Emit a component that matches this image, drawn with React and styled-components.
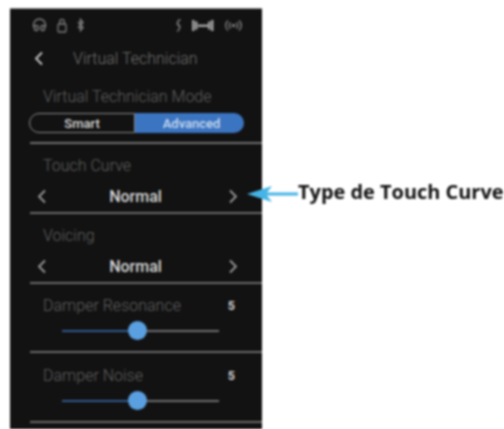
import React from 'react';
import styled, { createGlobalStyle } from 'styled-components';

const GlobalStyle = createGlobalStyle`
  html, body {
    margin: 0;
    padding: 0;
    background: #ffffff;
    overflow: hidden;
  }
`;

const Page = styled.div`
  position: relative;
  width: 504px;
  height: 429px;
  padding: 8px 0 0 10px;
  box-sizing: border-box;
  filter: blur(0.85px);
  font-family: Roboto, "Liberation Sans", sans-serif;
`;

const Panel = styled.div`
  width: 252px;
  height: 421px;
  box-sizing: border-box;
  background: #121212;
  border-top: 1px solid #8a8a8a;
  padding-left: 20px;
  display: flex;
  flex-direction: column;
`;

const StatusBar = styled.div`
  height: 32px;
  padding: 0 19px 0 2px;
  display: flex;
  align-items: center;
  gap: 10px;
  color: #7c7c7c;
`;

const StatusGap = styled.div`
  flex: 1;
`;

const TitleBar = styled.div`
  height: 34px;
  display: flex;
  align-items: center;
  gap: 29px;
  padding-left: 4px;
`;

const Title = styled.div`
  font-size: 16px;
  font-weight: 300;
  color: #707070;
`;

const ModeSection = styled.div`
  height: 69px;
  box-sizing: border-box;
  border-bottom: 2px solid #6e6e6e;
  display: flex;
  flex-direction: column;
`;

const Label = styled.div`
  font-size: 16px;
  font-weight: 300;
  color: ${(p) => p.$color || '#606060'};
  line-height: 20px;
`;

const ModeLabel = styled(Label)`
  margin: 12px 0 0 13px;
`;

const Toggle = styled.div`
  display: flex;
  width: 215px;
  height: 20px;
  margin-top: 6px;
  margin-left: -1px;
`;

const ToggleOption = styled.div`
  width: ${(p) => (p.$active ? '109px' : '106px')};
  display: flex;
  align-items: center;
  justify-content: center;
  box-sizing: border-box;
  font-size: 13px;
  font-weight: 500;
  padding-left: ${(p) => (p.$active ? '4px' : '0')};
  color: ${(p) => (p.$active ? '#c9dcf2' : '#dddddd')};
  background: ${(p) => (p.$active ? '#3b74c0' : 'transparent')};
  border: ${(p) => (p.$active ? 'none' : '1.5px solid #8a8a8a')};
  border-radius: ${(p) => (p.$active ? '0 10px 10px 0' : '10px 0 0 10px')};
`;

const Section = styled.div`
  height: ${(p) => p.$height || 70}px;
  box-sizing: border-box;
  border-bottom: 2px solid #6a6a6a;
  padding-top: ${(p) => p.$top || 12}px;
`;

const SectionLabel = styled(Label)`
  margin-left: 13px;
`;

const Selector = styled.div`
  display: flex;
  align-items: center;
  justify-content: space-between;
  margin-top: 9px;
  padding: 0 24px 0 7px;
  height: 22px;
`;

const SelectorValue = styled.div`
  font-size: 16px;
  font-weight: 500;
  color: #d8d8d8;
  margin-right: 4px;
`;

const LabelRow = styled.div`
  display: flex;
  justify-content: space-between;
  padding-right: 27px;
`;

const Value = styled.div`
  font-size: 12.5px;
  font-weight: 700;
  color: #d0d0d0;
  line-height: 20px;
`;

const Slider = styled.div`
  position: relative;
  width: 157px;
  height: 2px;
  margin: 14px 0 0 32px;
  background: #6e6e6e;
`;

const SliderFill = styled.div`
  height: 100%;
  background: #2f5a8c;
`;

const Thumb = styled.div`
  position: absolute;
  top: -9px;
  width: 19px;
  height: 19px;
  margin-left: -9.5px;
  border-radius: 50%;
  background: #5a9fe0;
`;

const Callout = styled.div`
  position: absolute;
  top: 180px;
  left: 247px;
  display: flex;
  align-items: center;
`;

const CalloutText = styled.div`
  font-family: "Open Sans", "Liberation Sans", sans-serif;
  font-size: 19.95px;
  font-weight: 700;
  color: #111111;
  white-space: nowrap;
  line-height: 24px;
`;

const Chevron = ({ dir = 'left', color = '#9a9a9a' }) => (
  <svg width="10" height="15" viewBox="0 0 10 15" fill="none" stroke={color} strokeWidth="1.8">
    <path d={dir === 'left' ? 'M8 1.5 2 7.5l6 6' : 'M2 1.5l6 6-6 6'} />
  </svg>
);

const HeadphonesIcon = () => (
  <svg width="15" height="14" viewBox="0 0 15 14" fill="none" stroke="currentColor" strokeWidth="1.5">
    <path d="M1.5 9V7a6 6 0 0 1 12 0v2" />
    <rect x="2.5" y="7.5" width="3.5" height="5" rx="1.5" />
    <rect x="9" y="7.5" width="3.5" height="5" rx="1.5" />
  </svg>
);

const LockIcon = () => (
  <svg width="10" height="15" viewBox="0 0 10 15" fill="none" stroke="currentColor" strokeWidth="1.3">
    <path d="M2.8 6V3.5a2.2 2.2 0 0 1 4.4 0V6" />
    <rect x="1" y="6" width="8" height="8" rx="1" />
  </svg>
);

const BluetoothIcon = () => (
  <svg width="7" height="14" viewBox="0 0 7 14" fill="none" stroke="currentColor" strokeWidth="1.5">
    <path d="M1 4l5 5.5L3.5 12.5v-11L6 4.5 1 10" />
  </svg>
);

const MetronomeIcon = () => (
  <svg width="7" height="15" viewBox="0 0 7 15" fill="none" stroke="currentColor" strokeWidth="1.5">
    <path d="M5.5 1.5C2 3 2 5 3.5 7s2 4-1.5 6.5" />
    <path d="M1.5 5.5l4 3" />
  </svg>
);

const WaveIcon = () => (
  <svg width="22" height="13" viewBox="0 0 22 13" fill="#a0a0a0">
    <rect x="0" y="1" width="2.5" height="11" />
    <rect x="3" y="2.5" width="2.5" height="8" />
    <rect x="6" y="5.5" width="10" height="2.5" />
    <rect x="16" y="2.5" width="2.5" height="8" />
    <rect x="19" y="1" width="2.5" height="11" />
  </svg>
);

const WirelessIcon = () => (
  <svg width="19" height="13" viewBox="0 0 19 13" fill="none" stroke="currentColor" strokeWidth="1.5">
    <path d="M4 1.5c-3 3-3 7 0 10" />
    <path d="M6.5 3.5c-1.5 2-1.5 4 0 6" />
    <circle cx="9.5" cy="6.5" r="1" fill="currentColor" />
    <path d="M12.5 3.5c1.5 2 1.5 4 0 6" />
    <path d="M15 1.5c3 3 3 7 0 10" />
  </svg>
);

const ArrowIcon = () => (
  <svg width="51" height="24" viewBox="0 0 51 24">
    <path d="M0 14 25 6 20 12.5H51V15.5H20L25 22Z" fill="#45b4e6" />
  </svg>
);

const SelectorRow = ({ label, value }) => (
  <Section>
    <SectionLabel>{label}</SectionLabel>
    <Selector>
      <Chevron dir="left" />
      <SelectorValue>{value}</SelectorValue>
      <Chevron dir="right" />
    </Selector>
  </Section>
);

const SliderRow = ({ label, value, percent, height, top }) => (
  <Section $height={height} $top={top}>
    <LabelRow>
      <SectionLabel>{label}</SectionLabel>
      <Value>{value}</Value>
    </LabelRow>
    <Slider>
      <SliderFill style={{ width: `${percent}%` }} />
      <Thumb style={{ left: `${percent}%` }} />
    </Slider>
  </Section>
);

const App = () => (
  <>
    <GlobalStyle />
    <Page>
      <Panel>
        <StatusBar>
          <HeadphonesIcon />
          <LockIcon />
          <BluetoothIcon />
          <StatusGap />
          <MetronomeIcon />
          <WaveIcon />
          <WirelessIcon />
        </StatusBar>
        <TitleBar>
          <Chevron dir="left" color="#c8c8c8" />
          <Title>Virtual Technician</Title>
        </TitleBar>
        <ModeSection>
          <ModeLabel>Virtual Technician Mode</ModeLabel>
          <Toggle>
            <ToggleOption>Smart</ToggleOption>
            <ToggleOption $active>Advanced</ToggleOption>
          </Toggle>
        </ModeSection>
        <SelectorRow label="Touch Curve" value="Normal" />
        <SelectorRow label="Voicing" value="Normal" />
        <SliderRow label="Damper Resonance" value="5" percent={48} height={69} />
        <SliderRow label="Damper Noise" value="5" percent={48} top={13} />
      </Panel>
      <Callout>
        <ArrowIcon />
        <CalloutText>Type de Touch Curve</CalloutText>
      </Callout>
    </Page>
  </>
);

export default App;
